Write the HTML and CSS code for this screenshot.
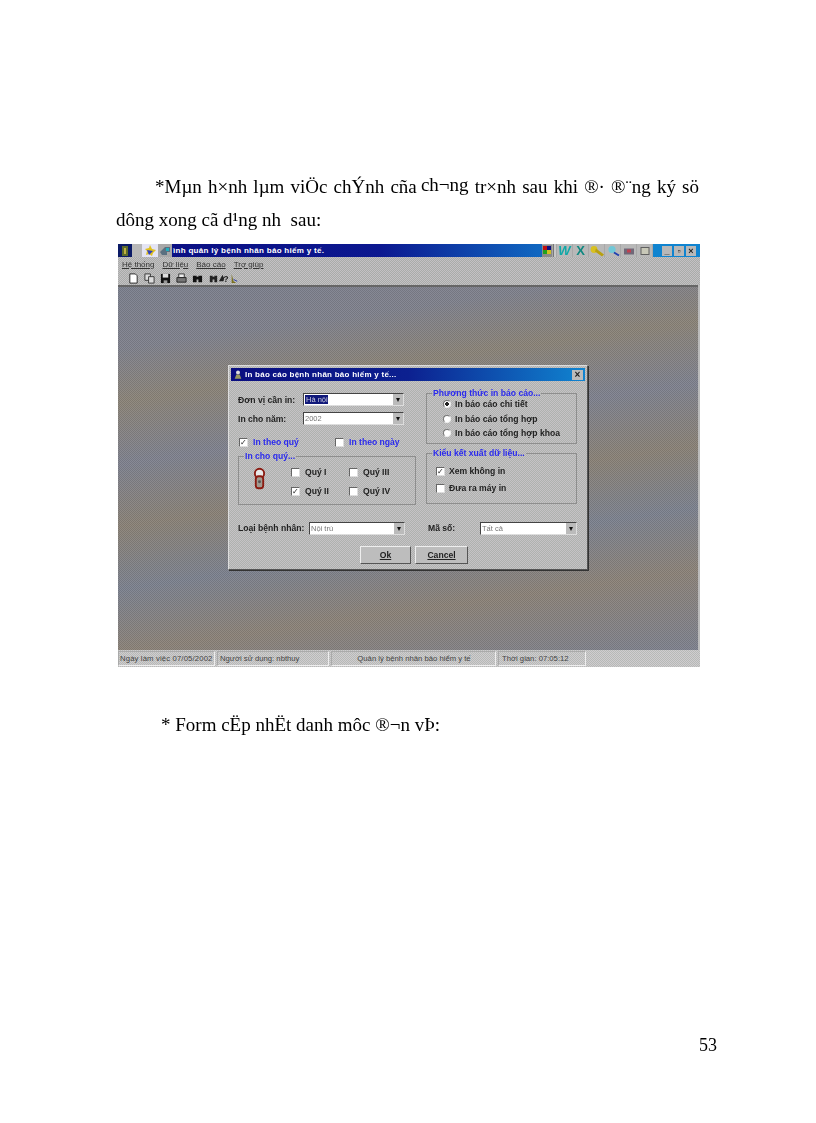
FILE: index.html
```html
<!DOCTYPE html>
<html lang="vi">
<head>
<meta charset="utf-8">
<title>Trang 53</title>
<link rel="stylesheet" href="styles.css">
</head>
<body>
<main class="sheet">
  <p class="line line-first">*Mµn h×nh lµm viÖc chÝnh cña <span class="raised">ch¬ng</span> tr×nh sau khi ®· ®¨ng ký sö</p>
  <p class="line line-second">dông xong cã d¹ng nh&nbsp; sau:</p>

  <section class="app">
    <header class="titlebar">
      <svg class="ti ti-logo" viewBox="0 0 14 13"><rect width="14" height="13" fill="#0b1a66"/><path d="M4 2h6v10H4z" fill="#5d6b2a"/><path d="M6 4h2v6H6z" fill="#c0b040"/></svg>
      <span class="ti-gap"></span>
      <svg class="ti ti-sun" viewBox="0 0 16 13"><rect width="16" height="13" fill="#e4e4f4"/><path d="M8 1l2 4 4 1-3 3-1 3-3-2-3 1 1-4-2-2 4-1z" fill="#e0c020"/><path d="M5 6l6 1-4 4z" fill="#3040c0"/></svg>
      <svg class="ti ti-net" viewBox="0 0 14 13"><rect width="14" height="13" fill="#a8a8a8"/><path d="M2 8l5-5h5v5H9v3H4z" fill="#5a7080"/><path d="M8 4h3v3H8z" fill="#20b0c0"/></svg>
      <span class="app-title">ình quản lý bệnh nhân bảo hiểm y tế.</span>
      <span class="title-tools">
        <svg class="tool-flag" viewBox="0 0 10 12"><rect width="10" height="12" fill="#8a8a8a"/><rect x="1" y="1" width="4" height="4" fill="#c01010"/><rect x="5" y="1" width="4" height="4" fill="#101080"/><rect x="1" y="5" width="4" height="4" fill="#20a020"/><rect x="5" y="5" width="4" height="4" fill="#d0c020"/></svg>
        <span class="tool-sep"></span>
        <span class="tool tool-w">W</span>
        <span class="tool tool-x">X</span>
        <span class="tool"><svg viewBox="0 0 14 11"><circle cx="4" cy="4" r="3.4" fill="#d8c020"/><path d="M6 3l8 6-2 2-7-5z" fill="#b8a010"/></svg></span>
        <span class="tool"><svg viewBox="0 0 14 11"><circle cx="6" cy="4" r="3.6" fill="#70c8d8"/><path d="M8 7l5 3" stroke="#2040b0" stroke-width="2"/></svg></span>
        <span class="tool"><svg viewBox="0 0 14 11"><rect x="2" y="3" width="10" height="6" fill="#706878"/><rect x="5" y="4" width="4" height="3" fill="#c04050"/></svg></span>
        <span class="tool"><svg viewBox="0 0 14 11"><rect x="3" y="2" width="8" height="7" fill="#c8c8b8" stroke="#606060"/></svg></span>
      </span>
      <span class="winbtns">
        <span class="winbtn">_</span><span class="winbtn">▫</span><span class="winbtn">×</span>
      </span>
    </header>

    <nav class="menubar">
      <span class="menu-item">Hệ thống</span>
      <span class="menu-item">Dữ liệu</span>
      <span class="menu-item">Báo cáo</span>
      <span class="menu-item">Trợ giúp</span>
    </nav>

    <div class="toolbar">
      <svg class="tb" viewBox="0 0 12 12"><path d="M2 1h6l2 2v8H2z" fill="#fff" stroke="#222"/></svg>
      <svg class="tb" viewBox="0 0 12 12"><path d="M1 1h6v7H1z" fill="#ddd" stroke="#333"/><path d="M5 4h6v7H5z" fill="#ddd" stroke="#333"/></svg>
      <svg class="tb" viewBox="0 0 12 12"><path d="M1 1h10v10H1z" fill="#111"/><path d="M3 1h6v4H3z" fill="#ddd"/><path d="M4 8h4v3H4z" fill="#999"/></svg>
      <svg class="tb" viewBox="0 0 12 12"><path d="M3 1h6v4H3z" fill="#eee" stroke="#333"/><path d="M1 5h10v5H1z" fill="#777" stroke="#222"/></svg>
      <svg class="tb" viewBox="0 0 12 12"><path d="M1 3h4v7H1zM7 3h4v7H7zM4 4h4v3H4z" fill="#111"/></svg>
      <svg class="tb" viewBox="0 0 12 12"><path d="M2 3h3v7H2zM7 3h3v7H7zM4 4h4v3H4z" fill="#222"/></svg>
      <svg class="tb tb-near" viewBox="0 0 12 12"><path d="M1 9l4-7 1 3 1-1-1 5z" fill="#222"/><text x="6" y="10" class="tb-q">?</text></svg>
      <svg class="tb tb-near" viewBox="0 0 12 12"><path d="M4 1l2 8 3 2H4z" fill="#7a7020"/><path d="M6 7l4 2" stroke="#2030a0"/></svg>
    </div>

    <div class="desktop">
      <section class="dialog">
        <header class="dlg-title">
          <svg class="dlg-icon" viewBox="0 0 12 12"><circle cx="6" cy="3.5" r="2.4" fill="#ddd"/><path d="M2 11l2-5h4l2 5z" fill="#9a9a60"/></svg>
          <span class="dlg-text">In báo cáo bệnh nhân bảo hiểm y tế...</span>
          <span class="dlg-close">×</span>
        </header>
        <div class="dlg-main">
          <div class="col-left">
            <div class="field">
              <label class="lbl">Đơn vị cần in:</label>
              <span class="combo"><span class="combo-val selected">Hà nội</span><span class="combo-btn">▾</span></span>
            </div>
            <div class="field field-2">
              <label class="lbl">In cho năm:</label>
              <span class="combo"><span class="combo-val">2002</span><span class="combo-btn">▾</span></span>
            </div>
            <div class="mode-row">
              <span class="opt opt-blue opt-mode"><span class="box on">✓</span>In theo quý</span>
              <span class="opt opt-blue"><span class="box"></span>In theo ngày</span>
            </div>
            <fieldset class="group group-q">
              <legend class="legend">In cho quý...</legend>
              <div class="q-body">
                <svg class="q-icon" viewBox="0 0 14 24"><circle cx="7" cy="6" r="5" fill="#e8e8e8" stroke="#8a1a10" stroke-width="2"/><rect x="3" y="9" width="8" height="13" rx="3" fill="#a09a90" stroke="#8a1a10" stroke-width="2"/><circle cx="7" cy="15" r="1.6" fill="#555"/></svg>
                <div class="q-grid">
                  <span class="opt"><span class="box"></span>Quý I</span>
                  <span class="opt"><span class="box"></span>Quý III</span>
                  <span class="opt"><span class="box on">✓</span>Quý II</span>
                  <span class="opt"><span class="box"></span>Quý IV</span>
                </div>
              </div>
            </fieldset>
          </div>
          <div class="col-right">
            <fieldset class="group group-r1">
              <legend class="legend">Phương thức in báo cáo...</legend>
              <div class="stack stack-radio">
                <span class="opt"><span class="radio on"></span>In báo cáo chi tiết</span>
                <span class="opt"><span class="radio"></span>In báo cáo tổng hợp</span>
                <span class="opt"><span class="radio"></span>In báo cáo tổng hợp khoa</span>
              </div>
            </fieldset>
            <fieldset class="group group-r2">
              <legend class="legend">Kiểu kết xuất dữ liệu...</legend>
              <div class="stack stack-out">
                <span class="opt"><span class="box on">✓</span>Xem không in</span>
                <span class="opt"><span class="box"></span>Đưa ra máy in</span>
              </div>
            </fieldset>
          </div>
        </div>
        <div class="dlg-row">
          <label class="lbl lbl-type">Loại bệnh nhân:</label>
          <span class="combo combo-type"><span class="combo-val">Nội trú</span><span class="combo-btn">▾</span></span>
          <label class="lbl lbl-code">Mã số:</label>
          <span class="combo combo-code"><span class="combo-val">Tất cả</span><span class="combo-btn">▾</span></span>
        </div>
        <div class="dlg-actions">
          <button class="btn btn-ok">Ok</button>
          <button class="btn btn-cancel">Cancel</button>
        </div>
      </section>
    </div>

    <footer class="statusbar">
      <span class="cell c1">Ngày làm việc 07/05/2002</span>
      <span class="cell c2">Người sử dụng: nbthuy</span>
      <span class="cell c3">Quản lý bệnh nhân bảo hiểm y tế</span>
      <span class="cell c4">Thời gian: 07:05:12</span>
      <span class="cell c5"></span>
    </footer>
  </section>

  <p class="line line-form">* Form cËp nhËt danh môc ®¬n vÞ:</p>
  <div class="page-no">53</div>
</main>
</body>
</html>
```
FILE: styles.css
```css
* { box-sizing: border-box; }
html, body { margin: 0; background: #fff; }
.sheet {
  width: 816px;
  height: 1123px;
  padding: 170px 117px 68px 116px;
  display: flex;
  flex-direction: column;
  font-family: "Liberation Serif", serif;
  color: #000;
}
.line { margin: 0; font-size: 19px; line-height: 33px; filter: blur(0.3px); white-space: nowrap; }
.line-first { padding-left: 39px; text-align: justify; text-align-last: justify; white-space: normal; }
.raised { display: inline-block; transform: translateY(-2px); margin-left: -2px; }
.line-form { margin-top: 41px; padding-left: 45px; }
.page-no { margin-top: auto; margin-right: -18px; text-align: right; font-size: 18px; line-height: 20px; filter: blur(0.3px); }

.app {
  width: 582px;
  height: 423px;
  margin: 8px 0 0 2px;
  display: flex;
  flex-direction: column;
  font-family: "Liberation Sans", sans-serif;
  filter: blur(0.45px);
  background: #bbb;
}
.titlebar {
  height: 13px;
  display: flex;
  align-items: center;
  background: linear-gradient(90deg, #0a0e80 0, #0c1890 45%, #1066c0 72%, #1084d0 100%);
}
.ti { height: 13px; display: block; }
.ti-logo { width: 14px; }
.ti-gap { width: 10px; height: 13px; background: #b8b8b8; }
.ti-sun { width: 16px; }
.ti-net { width: 14px; }
.app-title { margin-left: 1px; color: #fff; font-size: 8px; font-weight: bold; letter-spacing: 0.3px; white-space: nowrap; }
.title-tools { margin-left: auto; display: flex; align-items: center; height: 13px; background: #a8a8a8; }
.tool-flag { width: 10px; height: 12px; }
.tool-sep { width: 3px; height: 13px; background: #c8c8c8; border-left: 1px solid #777; margin: 0 1px; }
.tool {
  width: 15px; height: 13px; margin-right: 1px;
  display: flex; align-items: center; justify-content: center;
  background: #b8b8b8; font-family: "Liberation Sans", sans-serif;
  font-weight: bold; font-style: italic; font-size: 13px;
}
.tool svg { width: 14px; height: 12px; }
.tool-w { color: #10a8a8; }
.tool-x { color: #108880; font-style: normal; }
.winbtns { display: flex; gap: 2px; height: 13px; padding: 2px 4px 1px 9px; background: #1084d0; align-items: center; }
.winbtn { width: 10px; height: 10px; background: #b8b8b8; color: #222; font-size: 9px; line-height: 10px; text-align: center; font-weight: bold; }

.menubar {
  height: 14px;
  display: flex;
  align-items: center;
  gap: 8px;
  padding-left: 4px;
  font-size: 8px;
  color: #333;
  background: repeating-conic-gradient(#c4c0c4 0 25%, #a8aca8 0 50%) 0 0 / 2px 2px;
}
.menu-item { text-decoration: underline; text-decoration-thickness: 0.5px; white-space: nowrap; }
.toolbar {
  height: 14px;
  display: flex;
  align-items: center;
  gap: 5px;
  padding-left: 10px;
  background: repeating-conic-gradient(#c4c0c4 0 25%, #a8aca8 0 50%) 0 0 / 2px 2px;
}
.tb { width: 11px; height: 11px; }
.tb-near { margin-left: -6px; }
.tb-q { font: bold 9px "Liberation Sans", sans-serif; fill: #222; }

.desktop {
  flex: 1;
  position: relative;
  margin-right: 2px;
  border-top: 2px solid #666;
  background:
    repeating-conic-gradient(rgba(60,60,60,.16) 0 25%, rgba(200,200,200,.12) 0 50%) 0 0 / 2px 2px,
    linear-gradient(172deg, #7b808e 0, #80828e 14%, #8c8478 26%, #7f8290 40%, #8b8276 54%, #7c8290 68%, #8d8378 82%, #7e8290 100%);
}
.dialog {
  position: absolute;
  left: 110px;
  top: 78px;
  width: 360px;
  height: 205px;
  padding: 2px;
  color: #222;
  background: repeating-conic-gradient(#c6c2c6 0 25%, #aeb2ae 0 50%) 0 0 / 2px 2px;
  border: 1px solid #555;
  border-top-color: #ddd;
  border-left-color: #ddd;
  box-shadow: 1px 1px 0 #333;
  font-size: 8.6px;
  font-weight: bold;
}
.dlg-title {
  height: 13px;
  display: flex;
  align-items: center;
  padding: 0 2px;
  color: #fff;
  font-size: 8px;
  letter-spacing: 0.25px;
  background: linear-gradient(90deg, #0a0e80 0, #0c2090 50%, #1084d0 100%);
}
.dlg-icon { width: 10px; height: 11px; margin-right: 2px; }
.dlg-text { white-space: nowrap; }
.dlg-close { margin-left: auto; width: 11px; height: 10px; background: #bbb; color: #222; font-size: 10px; line-height: 9px; text-align: center; }
.dlg-main { display: flex; padding: 6px 0 0 7px; height: 126px; }
.col-left { width: 178px; padding-top: 6px; }
.col-right { width: 151px; margin-left: 10px; display: flex; flex-direction: column; gap: 5px; margin-top: 2px; }
.field { display: flex; align-items: center; height: 13px; }
.field-2 { margin-top: 6px; }
.lbl { white-space: nowrap; }
.field .lbl { width: 65px; }
.combo {
  width: 101px; height: 13px;
  display: flex; align-items: center;
  background: #fff;
  border: 1px solid #444;
  border-right-color: #ddd;
  border-bottom-color: #ddd;
  font-weight: normal;
  font-size: 7.5px;
  color: #777;
}
.combo-val { flex: 1; padding-left: 1px; white-space: nowrap; }
.selected { flex: 0 0 auto; background: #10187a; color: #ccd; margin-left: 1px; }
.selected + .combo-btn { margin-left: auto; }
.combo-btn { width: 10px; height: 11px; background: #bbb; color: #111; font-size: 8px; line-height: 11px; text-align: center; }
.mode-row { display: flex; margin-top: 12px; padding-left: 1px; height: 10px; }
.opt-mode { width: 96px; }
.opt { display: flex; align-items: center; gap: 5px; white-space: nowrap; line-height: 10px; }
.opt-blue { color: #2a2aee; }
.box {
  width: 9px; height: 9px; flex: none;
  background: #fff; border: 1px solid #666;
  border-right-color: #ddd; border-bottom-color: #ddd;
  color: #222; font-size: 8px; line-height: 7px; text-align: center; font-weight: normal;
}
.radio { width: 8px; height: 8px; flex: none; border-radius: 50%; background: #fff; border: 1px solid #777; border-right-color: #eee; border-bottom-color: #eee; }
.radio.on { background: radial-gradient(circle, #222 0 1.6px, #fff 2px); }
.group { margin: 0; padding: 0; border: 1px solid #8e8e8e; min-width: 0; }
.legend { margin-left: 5px; padding: 0 1px; color: #2a2aee; white-space: nowrap; line-height: 9px; }
.group-q { margin-top: 5px; height: 53px; }
.q-body { display: flex; padding: 6px 0 0 14px; }
.q-icon { width: 13px; height: 24px; flex: none; }
.q-grid { display: grid; grid-template-columns: 58px auto; row-gap: 9px; margin: 0 0 0 25px; }
.group-r1 { height: 55px; }
.group-r2 { height: 55px; }
.stack { display: flex; flex-direction: column; }
.stack-radio { padding: 1px 0 0 16px; gap: 4.5px; }
.stack-radio .opt { gap: 4px; }
.stack-out { padding: 8px 0 0 9px; gap: 7px; }
.stack-out .opt { gap: 4px; }
.dlg-row { display: flex; align-items: center; padding-left: 7px; height: 14px; margin-top: 14px; }
.lbl-type { width: 71px; }
.combo-type { width: 96px; }
.combo-code { width: 97px; }
.lbl-code { width: 52px; margin-left: 23px; }
.dlg-actions { display: flex; gap: 4px; padding-left: 129px; margin-top: 11px; }
.btn {
  height: 18px; padding: 0;
  font: bold 8.6px "Liberation Sans", sans-serif;
  color: #222;
  background: #bdbdbd;
  border: 1px solid #555;
  border-top-color: #eee;
  border-left-color: #eee;
  text-decoration: underline;
}
.btn-ok { width: 51px; }
.btn-cancel { width: 53px; }

.statusbar {
  height: 17px;
  display: flex;
  gap: 2px;
  padding: 1px 0;
  font-size: 7.7px;
  color: #444;
  background: repeating-conic-gradient(#d0ccd0 0 25%, #b6bab6 0 50%) 0 0 / 2px 2px;
}
.cell { display: flex; align-items: center; border: 1px solid #aaa; border-right-color: #eee; border-bottom-color: #eee; white-space: nowrap; padding-left: 1px; }
.c1 { width: 97px; letter-spacing: 0.15px; }
.c2 { width: 112px; padding-left: 2px; }
.c3 { width: 165px; justify-content: center; }
.c4 { width: 88px; padding-left: 3px; }
.c5 { flex: 1; border: 0; }
```
